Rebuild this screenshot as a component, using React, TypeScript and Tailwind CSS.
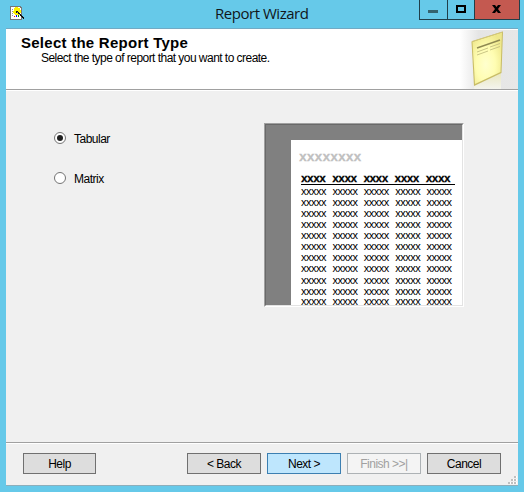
import React from "react";

const columns = [0, 1, 2, 3, 4];
const rows = ["h-[11px]", "h-[11px]", "h-[11px]", "h-[11px]", "h-[11px]", "h-[11px]", "h-[11px]", "h-[12px]", "h-[11px]", "h-[10px]", "h-[6px]"];

function WizardIcon() {
  return (
    <svg width="14" height="14" viewBox="0 0 14 14" shapeRendering="crispEdges">
      <path d="M0 0h10l2 2v12H0z" fill="#777" />
      <path d="M1 1h9l1 2v10H1z" fill="#fff" />
      <path d="M2 3h1v1H2zM2 5h1v1H2zM2 7h1v1H2zM2 9h1v1H2z" fill="#999" />
      <path d="M4 2h1V1h3v1h2v2h1v3h-1v1H9v1H5V8H4V7H3V5h1z" fill="#fff200" />
      <path d="M4 10h1v1H4z" fill="#f00" />
      <path d="M6 9h1v2H6z" fill="#00f" />
      <path d="M8 9h1v2H8z" fill="#080" />
      <path d="M6 5h2v1h1v1h1v1h1v1h1v1h1v1h1v2h-1v-1h-1v-1h-1v-1h-1V9H9V8H8V7H6z" fill="#111" />
      <path d="M7 6h1v1H7zM9 8h1v1H9z" fill="#888" />
    </svg>
  );
}

function ReportArt() {
  return (
    <svg width="58" height="60" viewBox="0 0 58 60">
      <defs>
        <linearGradient id="fade" x1="0" x2="1">
          <stop offset="0" stopColor="#fff" />
          <stop offset=".32" stopColor="#e5e5e5" />
          <stop offset="1" stopColor="#e7e7e7" />
        </linearGradient>
        <radialGradient id="paper" cx=".45" cy=".62" r=".65">
          <stop offset="0" stopColor="#ffffce" />
          <stop offset=".5" stopColor="#fffdb2" />
          <stop offset="1" stopColor="#eee78a" />
        </radialGradient>
        <linearGradient id="mirror" x1="0" x2="0" y1="0" y2="1">
          <stop offset="0" stopColor="#e9e7bf" />
          <stop offset="1" stopColor="#f4f4ee" />
        </linearGradient>
      </defs>
      <path d="M0 1h58v59H0z" fill="url(#fade)" />
      <path d="M14 57l27-13v16H14z" fill="url(#mirror)" />
      <path d="M11.500 12.500L43 2.500 41.500 44 14 57z" fill="#c8bc65" />
      <path d="M12.500 13L42 3.500 40.500 43 15 55z" fill="url(#paper)" />
      <path d="M12 12.500L42.500 3" stroke="#d3c77b" fill="none" />
      <path d="M17 19l23-8" stroke="#8f8951" strokeWidth="1.4" />
      <path d="M17 23l11-4M17 26l11-4M30 18l10-3.500M30 21l10-3.500" stroke="#bdb77a" strokeWidth=".8" />
    </svg>
  );
}

function TitleBar() {
  return (
    <header className="flex h-7 shrink-0">
      <div className="w-[209px] pt-1.5 pl-2.5"><WizardIcon /></div>
      <h1 className="w-[210px] pl-[6px] pt-[3px] whitespace-nowrap font-['Open_Sans',sans-serif] text-[15px] leading-[21px] tracking-[-0.47px] text-[#101619]">Report Wizard</h1>
      <div className="flex h-5 w-[101px] border-x border-b border-[#203f4a]">
        <div className="w-[27px] pt-2.5 pl-2"><div className="h-[3px] w-2.5 bg-[#34636f]" /></div>
        <div className="w-[27px] border-l border-[#203f4a] pt-[5px] pl-2"><div className="h-2 w-2.5 border-2 border-black" /></div>
        <div className="flex-1 border-l border-[#203f4a] bg-[#c45950] pt-[5px] pl-[17px]">
          <svg width="9" height="8" viewBox="0 0 9 8"><path d="M0 0h3l1.500 2L6 0h3L6 4l3 4H6L4.500 6 3 8H0l3-4z" /></svg>
        </div>
      </div>
    </header>
  );
}

function ReportPreview() {
  return (
    <div className="h-[184px] w-[200px] border border-t-[#a0a0a0] border-l-[#a0a0a0] border-r-white border-b-white">
      <div className="h-[182px] w-[198px] overflow-hidden border border-t-[#696969] border-l-[#696969] border-r-[#e3e3e3] border-b-[#e3e3e3] bg-[#808080] pt-[15px] pl-[25px]">
        <div className="h-[165px] bg-white pl-2.5 pt-[11px]">
          <div className="-ml-[2px] h-[23px] font-['Liberation_Mono',monospace] text-[13px] leading-[14px] font-bold text-[#c0c0c0] [-webkit-text-stroke:0.3px_#c0c0c0]">xxxxxxxx</div>
          <div className="flex h-[11px] w-[154px] border-b border-black font-['Liberation_Mono',monospace]">
            {columns.map((c) => <div key={c} className="w-[31.2px] shrink-0 text-[11px] leading-[10px] font-bold tracking-[-0.5px] text-black [-webkit-text-stroke:0.3px_black]">xxxx</div>)}
          </div>
          <div className="pt-px font-['Liberation_Sans',sans-serif]">
            {rows.map((height, r) => (
              <div key={r} className={"flex " + height}>
                {columns.map((c) => <div key={c} className="w-[31.4px] shrink-0 text-[11px] leading-[10px] tracking-[-0.5px] text-black">xxxxx</div>)}
              </div>
            ))}
          </div>
        </div>
      </div>
    </div>
  );
}

function Radio({ label, checked = false }: { label: string; checked?: boolean }) {
  return (
    <label className="flex h-[40px] items-start">
      <span className="flex size-3 items-center justify-center rounded-full border border-[#747474] bg-white">{checked && <span className="size-1.5 rounded-full bg-[#202020]" />}</span>
      <span className="ml-2 pt-px text-[12px] leading-[12px] tracking-[-0.5px]">{label}</span>
    </label>
  );
}

const buttonBase = "flex h-[21px] items-center justify-center border-1 text-[12px] leading-none tracking-[-0.5px] pt-px";

export default function App() {
  return (
    <main className="flex h-[492px] w-[524px] flex-col overflow-hidden bg-[#66c9e9] font-['Liberation_Sans',sans-serif] text-black">
      <TitleBar />
      <div className="mx-1.5 flex h-[458px] w-[512px] flex-col border-t border-b border-t-[#72aac4] border-b-[#8caebb] bg-[#f0f0f0]">
        <section className="flex h-[61px] shrink-0 justify-between border-b border-[#a0a0a0] bg-white">
          <div className="pt-[7px] pl-[15px] whitespace-nowrap">
            <h2 className="h-[15px] origin-left scale-x-[1.07] text-[14px] leading-[15px] font-bold tracking-[0.25px]">Select the Report Type</h2>
            <p className="pl-5 text-[12px] leading-[14px] tracking-[-0.54px]">Select the type of report that you want to create.</p>
          </div>
          <ReportArt />
        </section>
        <section className="flex h-[353px] shrink-0 border-t border-b border-t-white border-b-[#a0a0a0] pt-8">
          <div className="w-[258px] shrink-0 pt-[9px] pl-12">
            <Radio label="Tabular" checked />
            <Radio label="Matrix" />
          </div>
          <ReportPreview />
        </section>
        <footer className="flex flex-1 border-t border-white pt-[9px] pl-[17px]">
          <button className={buttonBase + " mr-[91px] w-[73px] border-[#707070] bg-[#ddd]"}>Help</button>
          <button className={buttonBase + " mr-1.5 w-[74px] border-[#707070] bg-[#ddd]"}>&lt; Back</button>
          <button className={buttonBase + " mr-1.5 w-[74px] border-[#3c7fb1] bg-[#bee6fd]"}>Next &gt;</button>
          <button className={buttonBase + " mr-1.5 w-[74px] border-[#adb2b5] bg-[#f4f4f4] text-[#a0a0a0]"}>Finish &gt;&gt;|</button>
          <button className={buttonBase + " w-[74px] border-[#707070] bg-[#ddd]"}>Cancel</button>
          <svg className="ml-[7px] self-end" width="9" height="9" viewBox="0 0 9 9" shapeRendering="crispEdges">
            <path d="M7 0h2v2H7zM4 3h2v2H4zM7 3h2v2H7zM1 6h2v2H1zM4 6h2v2H4zM7 6h2v2H7z" fill="#fff" />
            <path d="M6 0h2v2H6zM3 3h2v2H3zM6 3h2v2H6zM0 6h2v2H0zM3 6h2v2H3zM6 6h2v2H6z" fill="#bfbfbf" />
          </svg>
        </footer>
      </div>
    </main>
  );
}
